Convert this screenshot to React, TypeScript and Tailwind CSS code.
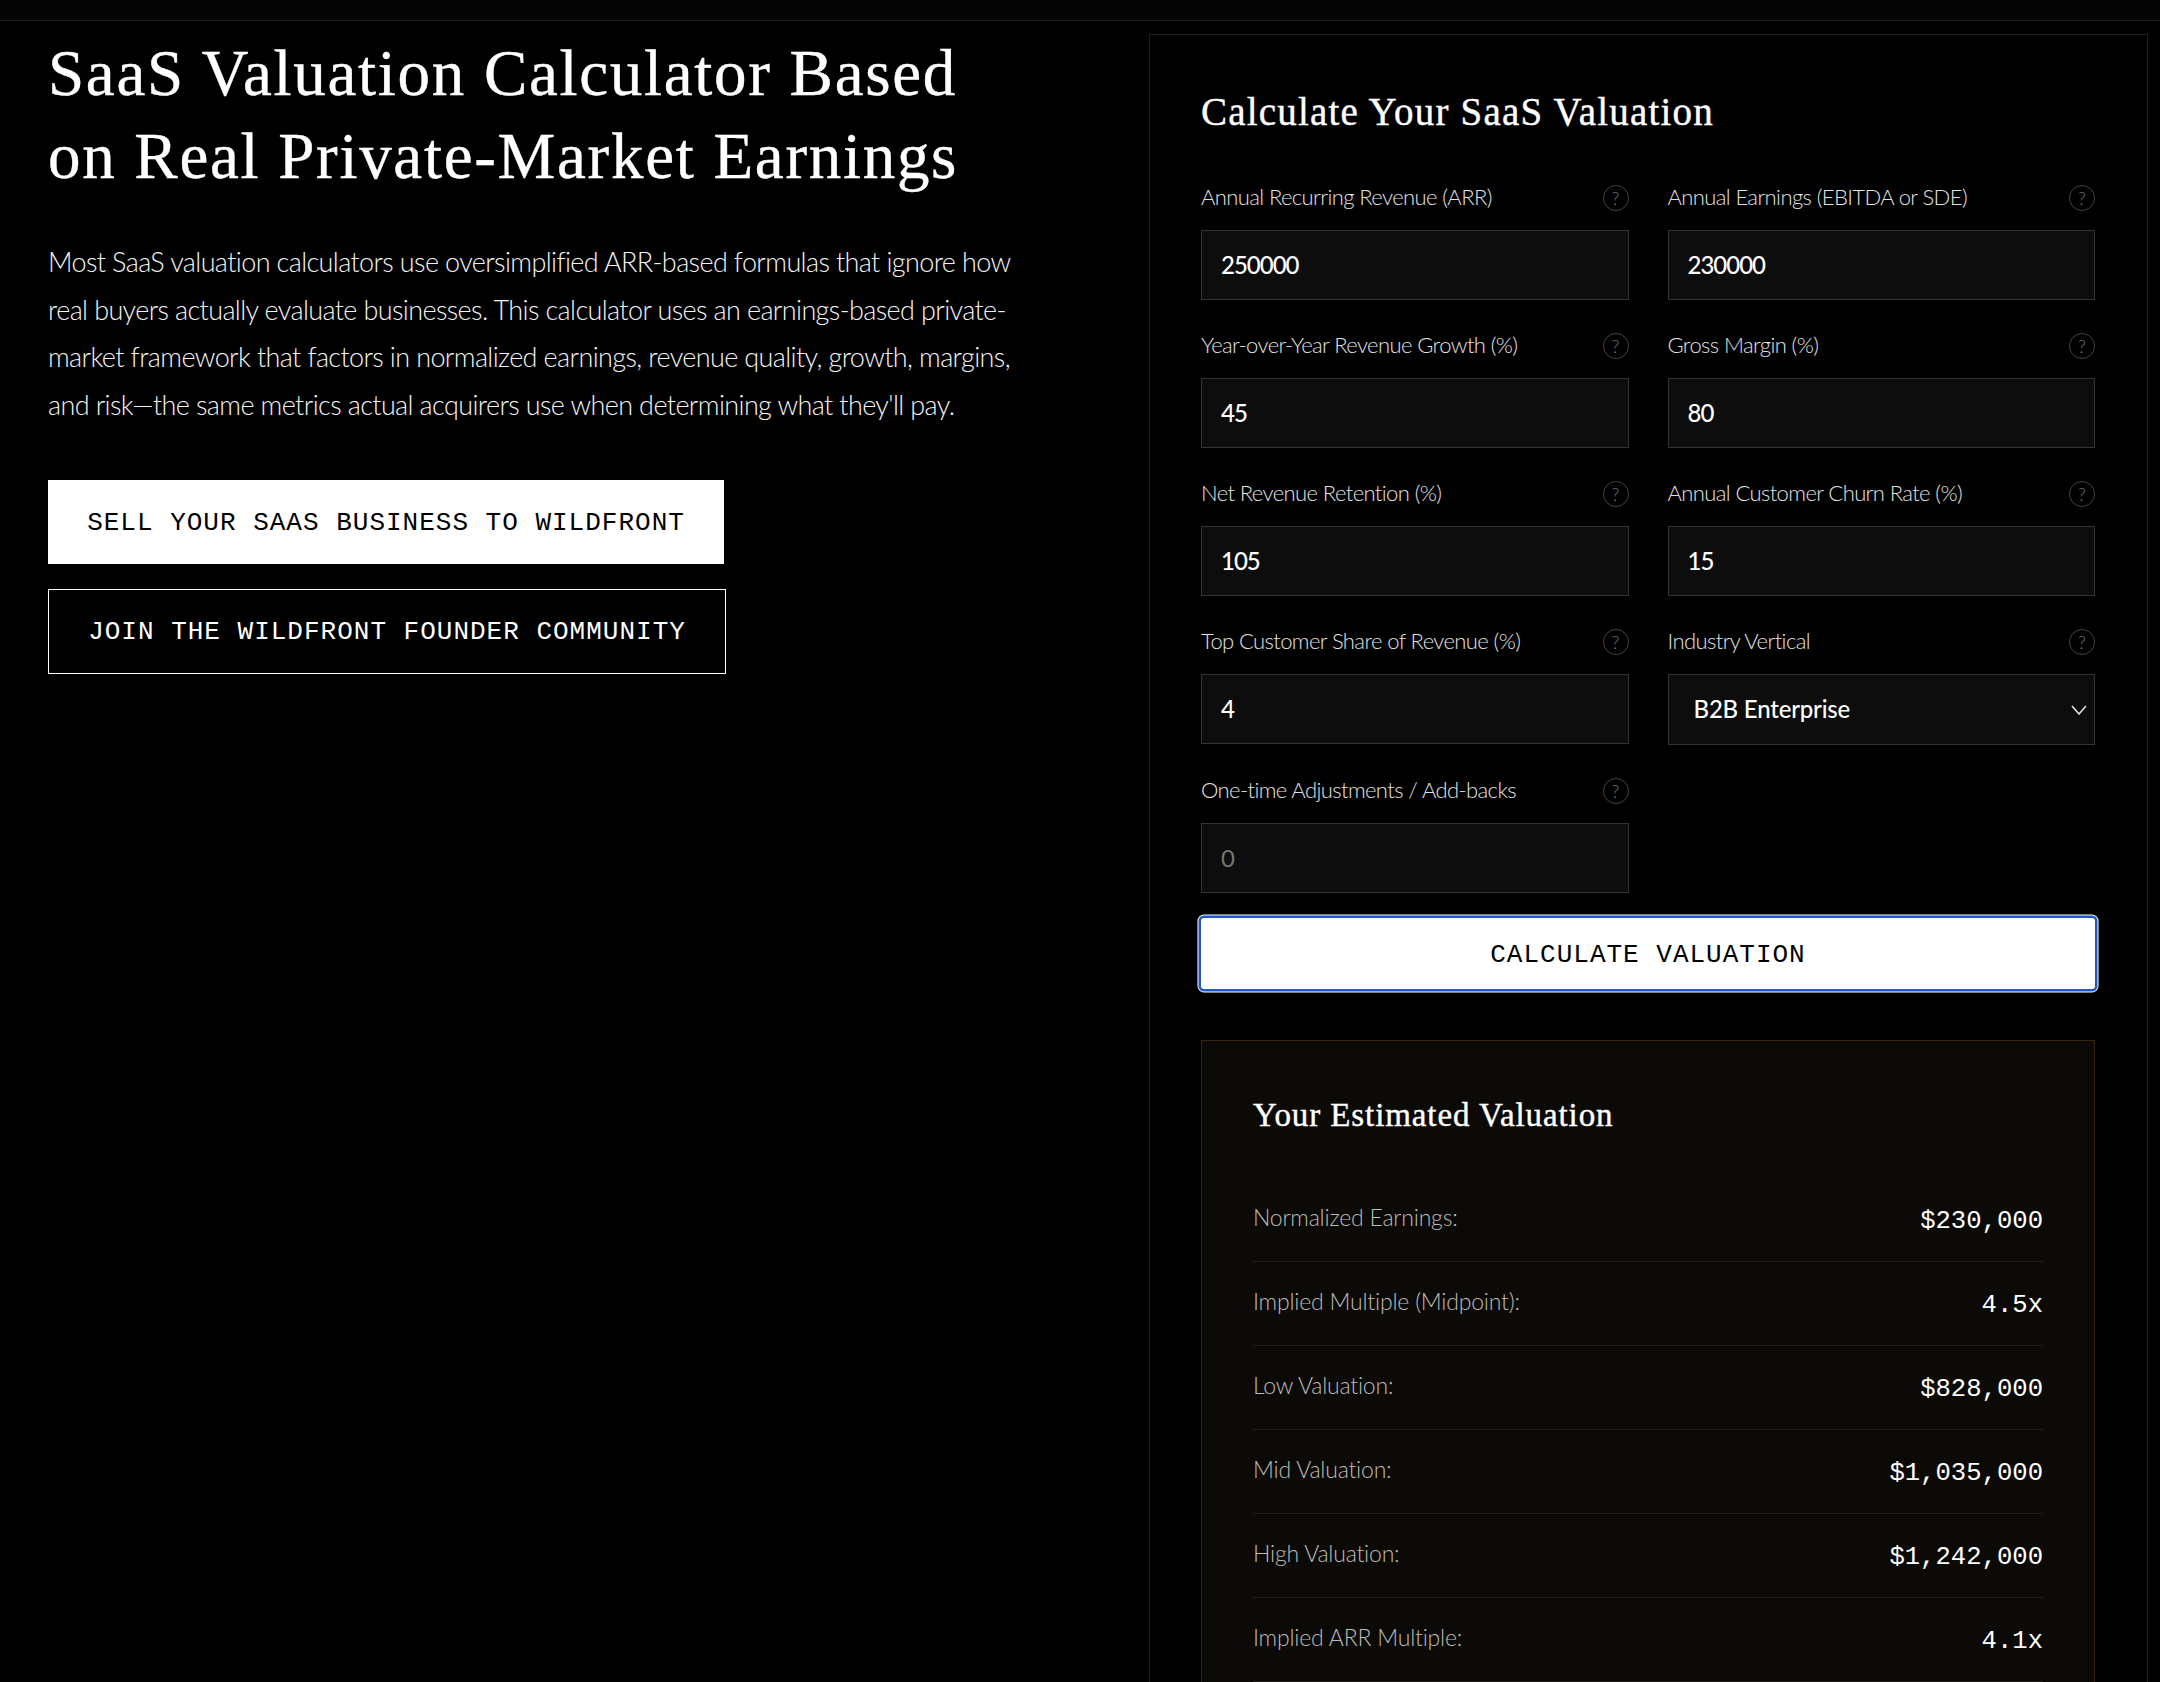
const INPUTS = [
  { label: "Annual Recurring Revenue (ARR)", value: "250000" },
  { label: "Annual Earnings (EBITDA or SDE)", value: "230000" },
  { label: "Year-over-Year Revenue Growth (%)", value: "45" },
  { label: "Gross Margin (%)", value: "80" },
  { label: "Net Revenue Retention (%)", value: "105" },
  { label: "Annual Customer Churn Rate (%)", value: "15" },
  { label: "Top Customer Share of Revenue (%)", value: "4" },
];

const RESULTS = [
  { label: "Normalized Earnings:", value: "$230,000" },
  { label: "Implied Multiple (Midpoint):", value: "4.5x" },
  { label: "Low Valuation:", value: "$828,000" },
  { label: "Mid Valuation:", value: "$1,035,000" },
  { label: "High Valuation:", value: "$1,242,000" },
  { label: "Implied ARR Multiple:", value: "4.1x" },
];

const serif = "font-['Liberation_Serif',serif] [-webkit-text-stroke:0.4px_white]";
const mono = "font-['Liberation_Mono',monospace]";

function FieldLabel({ label }: { label: string }) {
  return (
    <div className="flex items-center justify-between h-[26px] mb-[19px]">
      <span className="pb-[3px] text-[22px] font-light tracking-[-0.6px] text-[#e2e2e2]">{label}</span>
      <span className="flex items-center justify-center w-[26px] h-[26px] rounded-full border border-[#444444] text-[18px] font-light text-[#777777]">?</span>
    </div>
  );
}

function Field({ label, value }: { label: string; value: string }) {
  return (
    <div>
      <FieldLabel label={label} />
      <input
        readOnly
        value={value}
        className="block w-full h-[70px] px-[19px] pb-[2px] bg-[#0d0d0d] border border-[#333333] text-[24px] tracking-[-1px] font-medium text-white outline-none"
      />
    </div>
  );
}

export default function App() {
  return (
    <div className="h-[1682px] overflow-hidden bg-black text-white font-['Lato',sans-serif]">
      <div className="h-[21px] border-b border-[#1c1c1c] bg-[#050505]" />

      <div className="flex items-start pl-12 pr-3 pt-[13px]">
        {/* Intro */}
        <div className="w-[1101px] shrink-0">
          <h1 className={`${serif} -mt-[2px] text-[65px] leading-[83px] tracking-[1.7px] font-normal text-white`}>
            SaaS Valuation Calculator Based
            <br />
            on Real Private-Market Earnings
          </h1>
          <p className="mt-[40px] text-[27px] leading-[47.5px] font-light tracking-[-0.62px] text-[#f4f4f4]">
            Most SaaS valuation calculators use oversimplified ARR-based formulas that ignore how
            <br />
            real buyers actually evaluate businesses. This calculator uses an earnings-based private-
            <br />
            market framework that factors in normalized earnings, revenue quality, growth, margins,
            <br />
            and risk—the same metrics actual acquirers use when determining what they'll pay.
          </p>
          <div className="mt-[52px] flex flex-col items-start gap-[25px]">
            <a className={`${mono} flex items-center justify-center w-[676px] h-[84px] pt-[2px] bg-white text-black text-[26px] tracking-[1px] uppercase`}>
              Sell your SaaS business to Wildfront
            </a>
            <a className={`${mono} flex items-center justify-center w-[678px] h-[85px] pt-[2px] border border-white text-white text-[26px] tracking-[1px] uppercase`}>
              Join the Wildfront founder community
            </a>
          </div>
        </div>

        {/* Calculator card */}
        <div className="w-[999px] border border-[#1f1f1f] pt-[51px] pl-[51px] pr-[52px] pb-[51px]">
          <h2 className={`${serif} text-[39px] leading-[52px] font-normal tracking-[1.2px] mb-[47px] [-webkit-text-stroke:0.3px_white]`}>Calculate Your SaaS Valuation</h2>

          <div className="grid grid-cols-2 gap-x-[39px] gap-y-[33px]">
            {INPUTS.map((f) => (
              <Field key={f.label} label={f.label} value={f.value} />
            ))}
            <div>
              <FieldLabel label="Industry Vertical" />
              <div className="relative">
                <select className="block w-full h-[71px] pl-[25px] pr-10 pb-[1px] bg-[#0d0d0d] border border-[#333333] text-[24px] tracking-[-0.2px] font-medium text-white appearance-none outline-none">
                  <option>B2B Enterprise</option>
                </select>
                <svg className="absolute right-[8px] top-[31px] pointer-events-none" width="16" height="10" viewBox="0 0 16 10" fill="none">
                  <path d="M1 1l7 8 7-8" stroke="#e5e5e5" strokeWidth="1.5" />
                </svg>
              </div>
            </div>
            <div>
              <FieldLabel label="One-time Adjustments / Add-backs" />
              <input
                readOnly
                placeholder="0"
                className="block w-full h-[70px] px-[19px] pb-[2px] bg-[#0d0d0d] border border-[#333333] text-[24px] text-white placeholder:text-[#757575] outline-none"
              />
            </div>
          </div>

          <button className={`${mono} block w-full h-[71px] mt-[25px] pt-[4px] bg-white text-black text-[26px] tracking-[1px] uppercase rounded-[3px] shadow-[0_0_0_2.5px_#2458c4,0_0_0_3.5px_#ffffff]`}>
            Calculate Valuation
          </button>

          {/* Results */}
          <div className="mt-[51px] border border-[#33230f] bg-[#0c0a06] p-[51px]">
            <h3 className={`${serif} text-[33px] leading-[46px] font-normal tracking-[0.9px] mb-[40px] [-webkit-text-stroke:0.3px_white]`}>Your Estimated Valuation</h3>
            {RESULTS.map((r) => (
              <div key={r.label} className="flex items-center justify-between h-[84px] border-b border-[#1f1e1a]">
                <span className="pb-[4px] text-[23px] font-light tracking-[-0.2px] text-[#bcbcb8]">{r.label}</span>
                <span className={`${mono} pt-[5px] text-[25.6px] text-white`}>{r.value}</span>
              </div>
            ))}
          </div>
        </div>
      </div>
    </div>
  );
}
